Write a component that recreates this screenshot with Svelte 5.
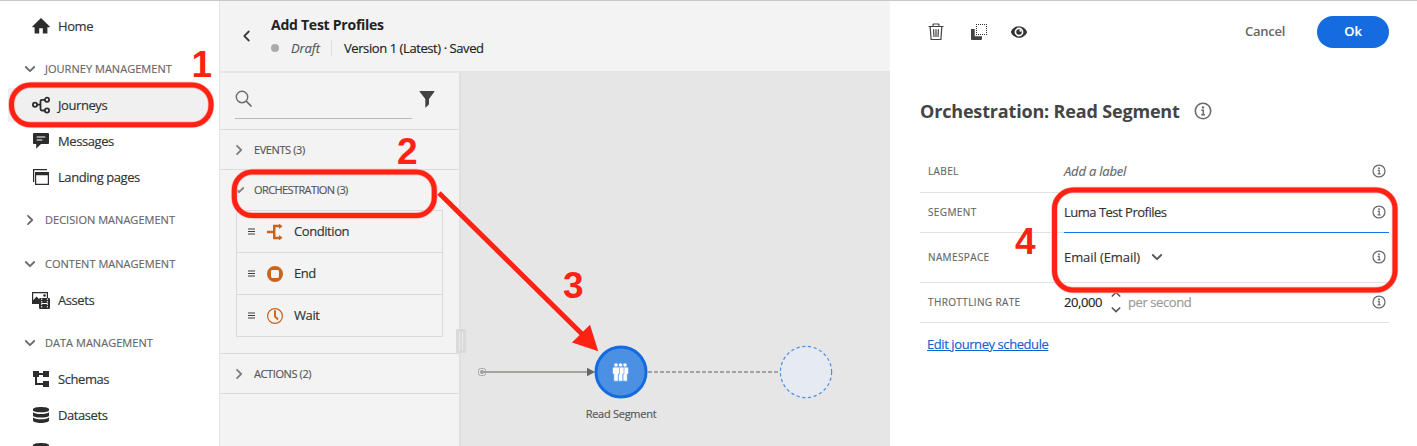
<script>
  const nav = [
    { label: 'Home', icon: 'home' },
    { label: 'JOURNEY MANAGEMENT', head: true, open: true },
    { label: 'Journeys', icon: 'journeys', active: true },
    { label: 'Messages', icon: 'messages' },
    { label: 'Landing pages', icon: 'landing' },
    { label: 'DECISION MANAGEMENT', head: true, open: false },
    { label: 'CONTENT MANAGEMENT', head: true, open: true, gap: true },
    { label: 'Assets', icon: 'assets' },
    { label: 'DATA MANAGEMENT', head: true, open: true },
    { label: 'Schemas', icon: 'schemas' },
    { label: 'Datasets', icon: 'datasets' },
    { label: '', icon: 'datasets' }
  ];
  const blocks = ['Condition', 'End', 'Wait'];
</script>

{#snippet chevron(open)}
  <svg class="chev" width="12" height="12" viewBox="0 0 12 12">
    {#if open}
      <path d="M1.8 4 6 8.2 10.2 4" />
    {:else}
      <path d="M4 1.8 8.2 6 4 10.2" />
    {/if}
  </svg>
{/snippet}

{#snippet info(size)}
  <svg width={size} height={size} viewBox="0 0 18 18" fill="none" stroke="#6a6a6a">
    <circle cx="9" cy="9" r="7.7" stroke-width="1.6" />
    <circle cx="9" cy="5.4" r="1.2" fill="#6a6a6a" stroke="none" />
    <path d="M7.3 8.2h2v4.4M7.2 12.7h3.8" stroke-width="1.5" />
  </svg>
{/snippet}

{#snippet navIcon(name)}
  <svg width="18" height="18" viewBox="0 0 18 18" fill="#2c2c2c">
    {#if name === 'home'}
      <path d="M9 .9 17.7 9.6q.3.6-.4.6H15.400v6.300h-4.600v-5.300H7.200v5.300H2.600V10.200H.7q-.7 0-.4-.6z" />
    {:else if name === 'journeys'}
      <g fill="none" stroke="#2c2c2c" stroke-width="1.8">
        <circle cx="3" cy="8.700" r="2.100" /><circle cx="15" cy="3.800" r="2.100" /><circle cx="15" cy="14.500" r="2.100" />
        <path d="M5 8.700h3.500M12.800 3.800H10q-1.500 0-1.500 1.500v7.700q0 1.500 1.500 1.500h2.800" />
      </g>
    {:else if name === 'messages'}
      <path d="M2 1h14q1 0 1 1v9q0 1-1 1H9l-4.800 4.800V12H2q-1 0-1-1V2q0-1 1-1z" />
      <path d="M4.700 5h8.600M4.700 8h5.600" stroke="#fff" stroke-width="1.200" />
    {:else if name === 'landing'}
      <path d="M1 1h14v1.200H2.200V14H1z" />
      <path d="M3 4h14v13H3zm1.200 3.300v8.500h11.600V7.300z" fill-rule="evenodd" />
    {:else if name === 'assets'}
      <path d="M0 1h16v6h-1.200V2.200H1.200v7L4.500 5.500 7 8v5H0z" fill-rule="evenodd" />
      <circle cx="12.500" cy="4.500" r="1.300" />
      <path d="M8.500 7h8.300q1.200 0 1.200 1.200v8.600q0 1.200-1.200 1.200H8.200Q7 18 7 16.800V8.200Q7 7 8.500 7z" />
      <path d="M9.700 7.500v10M15.300 7.500v10" stroke="#fff" stroke-width="1" stroke-dasharray="1.500 1" />
      <path d="M9.500 12.500h6" stroke="#fff" stroke-width="1" />
    {:else if name === 'schemas'}
      <path d="M1 1h6v2h4V1h6v6h-6V5H7v2H5v6h6v-2h6v6h-6v-2H3V7H1z" />
    {:else}
      <path d="M1 3.300C1 .2 17 .2 17 3.300v1C17 7 1 7 1 4.300z" />
      <path d="M1 6.200c2 2.400 14 2.400 16 0v3.300c0 2.700-16 2.700-16 0z" />
      <path d="M1 11.500c2 2.400 14 2.400 16 0v3c0 3.300-16 3.300-16 0z" />
    {/if}
  </svg>
{/snippet}

<div class="app">
  <aside>
    {#each nav as n}
      {#if n.head}
        <div class="head" class:gap={n.gap}>{@render chevron(n.open)}<span>{n.label}</span></div>
      {:else}
        <div class="item" class:active={n.active}>{@render navIcon(n.icon)}<span>{n.label}</span></div>
      {/if}
    {/each}
  </aside>

  <main>
    <header>
      <svg class="back" width="12" height="12" viewBox="0 0 12 12"><path d="M7.800 1.500 3.300 6l4.500 4.500" /></svg>
      <div class="titles">
        <h1>Add Test Profiles</h1>
        <div class="status"><i></i><em>Draft</em><b></b><span>Version 1 (Latest) · Saved</span></div>
      </div>
    </header>
    <div class="work">
      <div class="palette">
        <div class="search">
          <div class="field">
            <svg width="18" height="18" viewBox="0 0 18 18" fill="none" stroke="#6a6a6a" stroke-width="1.400"><circle cx="7" cy="7" r="5.700" /><path d="m11.200 11.200 5.300 5.300" stroke-width="1.700" /></svg>
          </div>
          <svg width="16" height="18" viewBox="0 0 16 18" fill="#424242"><path d="M.8 1h14.400q.6 0 .3.600L10 9v5.300L7 17.200q-.7.500-.7-.3V9L.5 1.600Q.2 1 .8 1z" /></svg>
        </div>
        <div class="sec">{@render chevron(false)}<span>EVENTS (3)</span></div>
        <div class="sec open">{@render chevron(true)}<span>ORCHESTRATION (3)</span></div>
        <div class="blocks">
          {#each blocks as b}
            <div class="block">
              <svg width="7" height="7" viewBox="0 0 7 7"><path d="M0 1h7M0 3.500h7M0 6h7" stroke="#3c3c3c" stroke-width="1" /></svg>
              <svg class="bi" width="16" height="16" viewBox="0 0 16 16" fill="#c9651b">
                {#if b === 'Condition'}
                  <path d="M0 6.800h6V.8h6V-.4L15.600 2.300 12 5V3.300H8.500v9.400H12V11l3.600 2.700L12 16.400v-1.200H6V9.200H0z" />
                {:else if b === 'End'}
                  <path d="M8 0a8 8 0 1 1 0 16A8 8 0 1 1 8 0zM5.400 4Q4 4 4 5.400v5.200Q4 12 5.400 12h5.200q1.400 0 1.400-1.400V5.400Q12 4 10.600 4z" fill-rule="evenodd" />
                {:else}
                  <circle cx="8" cy="8" r="7.400" fill="none" stroke="#c9651b" stroke-width="1.200" />
                  <path d="M8 2.300v6l3 3.200" fill="none" stroke="#c9651b" stroke-width="1.900" />
                {/if}
              </svg>
              <span>{b}</span>
            </div>
          {/each}
        </div>
        <div class="sec last">{@render chevron(false)}<span>ACTIONS (2)</span></div>
      </div>
      <div class="canvas">
        <svg width="429" height="373" viewBox="461 73 429 373">
          <rect x="478.500" y="368.500" width="7" height="7" rx="2" fill="none" stroke="#a9a9a9" />
          <circle cx="482" cy="372" r="2" fill="#a0a0a0" />
          <path d="M482 372h106" stroke="#a3a3a0" stroke-width="1.800" />
          <path d="M587 367.800v8.400l8-4.200z" fill="#666" />
          <path d="M648 372h132" stroke="#a3a3a3" stroke-width="1.800" stroke-dasharray="4 2" />
          <circle cx="621" cy="372" r="25" fill="#4b90e2" stroke="#146bdf" stroke-width="3" />
          <g fill="#fff" stroke="#4b90e2" stroke-width=".6">
            {#each [9, 4.5, 0] as dx}
              <g transform="translate({612.500 + dx} 363)">
                <path d="M1.500 4h4q1.500 0 1.500 1.500V11H5.800v7.200H1.300V11H0V5.500Q0 4 1.500 4z" />
                <circle cx="3.500" cy="2" r="2.100" />
              </g>
            {/each}
          </g>
          <circle cx="806" cy="372" r="25.600" fill="#e6eaf3" stroke="#4b90e2" stroke-width="1.200" stroke-dasharray="3.200 2.600" />
        </svg>
        <span class="node">Read Segment</span>
        <div class="grip"><i></i></div>
      </div>
    </div>
  </main>

  <section>
    <div class="tools">
      <svg width="16" height="18" viewBox="0 0 16 18" fill="none" stroke="#424242" stroke-width="1.200"><path d="M.5 3.500h15M5 3.200V1.600q0-.6.600-.6h4.800q.6 0 .6.600v1.600M2.200 4l.9 12.500h9.800L13.800 4M5.600 6.300l.4 7.700M8 6.300V14M10.400 6.300 10 14" /></svg>
      <svg class="dup" width="18" height="18" viewBox="0 0 18 18"><path d="M1 6h3.700v7.300H12V16q0 1-1 1H2q-1 0-1-1z" fill="#424242" /><path d="M6 1.500h11M6 11.500h11M6.500 3v8M16.500 3v8" fill="none" stroke="#333" stroke-width="1" stroke-dasharray="1 1" /></svg>
      <svg class="eye" width="18" height="18" viewBox="0 0 18 18"><path d="M9 3.200c4.400 0 8 3.900 8 5.800s-3.600 5.800-8 5.800S1 10.900 1 9s3.600-5.800 8-5.800z" fill="#333" /><circle cx="9" cy="9" r="4.400" fill="#fff" /><circle cx="9" cy="9" r="2.800" fill="#333" /><circle cx="10.500" cy="7.700" r="1.100" fill="#fff" /></svg>
      <span class="cancel">Cancel</span>
      <button>Ok</button>
    </div>
    <h2><span>Orchestration: Read Segment</span>{@render info(18)}</h2>
    <div class="form">
      <div class="row r1"><label>LABEL</label><span class="val"><em>Add a label</em></span>{@render info(14)}</div>
      <div class="row r2"><label>SEGMENT</label><span class="val seg">Luma Test Profiles</span>{@render info(14)}</div>
      <div class="row r3"><label>NAMESPACE</label><span class="val"><span class="ns">Email (Email)</span>{@render chevron(true)}</span>{@render info(14)}</div>
      <div class="row r4"><label>THROTTLING RATE</label><span class="val"><span class="num">20,000</span>
        <svg class="step" width="10" height="22" viewBox="0 0 10 22"><path d="m1.300 5 3.700-3.500L8.700 5M1.300 17 5 20.500 8.700 17" /></svg><span class="per">per second</span></span>{@render info(14)}</div>
    </div>
    <a href="#schedule">Edit journey schedule</a>
  </section>

  <svg class="notes" width="1417" height="446" viewBox="0 0 1417 446">
    <g fill="none">
      {#each [['#ffb3ad', 6.4], ['#fe2214', 5]] as [c, w]}
        <g stroke={c} stroke-width={w}>
          <rect x="11.500" y="85" width="199.500" height="39.800" rx="19" />
          <rect x="234.300" y="172" width="200" height="43.500" rx="18" />
          <rect x="1054.500" y="190" width="340.500" height="100" rx="19" />
        </g>
      {/each}
      <path d="M439 193 583 335" stroke="#fe2214" stroke-width="5" />
    </g>
    <g fill="#fe2214">
      <path d="M598.300 351.300 572 342.500 590 324.800z" />
      <text x="191.500" y="77">1</text>
      <text x="397" y="164">2</text>
      <text x="563" y="298">3</text>
      <text x="1015" y="254">4</text>
    </g>
  </svg>
</div>

<style>
  :global(body) { overflow: hidden; }
  .app { position: relative; display: flex; width: 1417px; height: 446px; overflow: hidden; box-sizing: border-box; border-top: 1px solid #c8c8c8; background: #fff; color: #333; font: 13px/18px "Open Sans", "Noto Sans", sans-serif; letter-spacing: -.42px; -webkit-text-stroke: .15px; }
  .app * { box-sizing: border-box; }
  svg { flex: none; display: block; }
  span, em, a, label { white-space: nowrap; }
  aside { width: 220px; flex: none; padding: 7px 8px 0; border-right: 1px solid #e4e4e4; background: #fff; }
  .item { display: flex; align-items: center; gap: 8px; height: 36px; padding-left: 24px; }
  .item.active { background: linear-gradient(#f0f0f0, #f0f0f0) 0 1px / 100% 34px no-repeat; }
  .head { display: flex; align-items: center; gap: 9px; height: 36px; margin-top: 7px; padding-left: 16px; font-size: 11px; letter-spacing: .03px; color: #666; }
  .head.gap { margin-top: 8px; }
  .chev { fill: none; stroke: #6b6b6b; stroke-width: 1.800; stroke-linecap: round; stroke-linejoin: round; }
  main { width: 670px; flex: none; display: flex; flex-direction: column; background: #f3f3f3; }
  header { display: flex; height: 72px; flex: none; padding: 14px 0 0 21px; border-bottom: 2px solid #e5e5e5; }
  .back { margin-top: 15px; fill: none; stroke: #3c3c3c; stroke-width: 1.800; stroke-linecap: round; stroke-linejoin: round; }
  .titles { margin-left: 18px; }
  h1 { margin: 0; font-size: 14px; line-height: 20px; font-weight: 700; letter-spacing: -.25px; color: #222; white-space: nowrap; -webkit-text-stroke: 0; }
  .status { display: flex; align-items: center; height: 26px; color: #222; }
  .status i { width: 8px; height: 8px; border-radius: 50%; background: #aaa; }
  .status em { margin-left: 12px; width: 29px; color: #555; letter-spacing: -.1px; }
  .status b { width: 1px; height: 16px; margin: 0 12px 0 11px; background: #dedede; }
  .work { display: flex; flex: 1; }
  .palette { width: 241px; border-right: 2px solid #e0e0e0; }
  .search { display: flex; height: 57px; padding: 17px 24px 0 15px; justify-content: space-between; border-bottom: 1px solid #dcdcdc; }
  .field { width: 177px; height: 29px; border-bottom: 1px solid #b8b8b8; }
  .sec { display: flex; align-items: center; gap: 9px; height: 40px; padding-left: 13px; border-bottom: 1px solid #dcdcdc; font-size: 11px; letter-spacing: -.4px; color: #555; }
  .sec .chev { stroke: #808080; }
  .sec.open { border: 0; letter-spacing: -.6px; }
  .sec.last { border-top: 1px solid #dcdcdc; height: 41px; }
  .blocks { width: 207px; margin: 0 0 16px 16px; border: 1px solid #dadada; }
  .block { display: flex; align-items: center; height: 42px; padding-left: 11px; border-bottom: 1px solid #dadada; }
  .block span { padding-bottom: 2px; }
  .block:last-child { height: 41px; border: 0; }
  .bi { margin: 0 11px 0 12px; }
  .canvas { position: relative; flex: 1; background: #e6e6e6; }
  .node { position: absolute; left: 96px; top: 332px; width: 128px; text-align: center; font-size: 11px; letter-spacing: -.27px; color: #555; }
  .grip { position: absolute; left: -5px; top: 256px; width: 10px; height: 24px; padding: 3px; background: #dadada; border-radius: 1px; }
  .grip i { display: block; height: 18px; border: solid #eaeaea; border-width: 0 1px; }
  section { flex: 1; padding: 15px 28px 0 30px; background: #fff; }
  .tools { display: flex; align-items: center; height: 32px; padding-left: 7.500px; }
  .dup { margin-left: 26px; }
  .eye { margin-left: 22px; }
  .cancel { margin-left: auto; padding-bottom: 2px; font-weight: 600; letter-spacing: -.25px; color: #666; -webkit-text-stroke: 0; }
  button { width: 72px; height: 32px; margin-left: 32px; padding: 0 0 2px; border: 0; border-radius: 16px; background: #146ce0; color: #fff; font: inherit; font-weight: 600; }
  h2 { display: flex; align-items: center; gap: 14px; height: 26px; margin: 50px 0 26px; font-size: 18px; letter-spacing: -.17px; color: #444; white-space: nowrap; -webkit-text-stroke: 0; }
  .form { width: 469px; }
  .row { display: flex; align-items: center; border-bottom: 1px solid #e2e2e2; padding: 0 3px 1px 8px; height: 40px; }
  .row.r1 { height: 43px; padding-bottom: 0; }
  .row.r2 { padding: 0 0 0 8px; }
  .row.r2 label { padding-bottom: 2px; }
  .row.r2 svg { margin: 0 3px 1px -17px; }
  .row.r3 { height: 50px; }
  label { width: 136px; flex: none; font-size: 10px; letter-spacing: .38px; color: #666; }
  .val { display: flex; align-items: center; flex: 1; }
  .seg { height: 40px; padding-bottom: 2px; margin-bottom: -1px; border-bottom: 1px solid #1473e6; letter-spacing: -.5px; }
  .val em { color: #666; letter-spacing: -.2px; }
  .ns { width: 77px; letter-spacing: -.08px; }
  .val .chev { margin-left: 10px; stroke: #555; }
  .num { width: 38px; color: #222; }
  .step { margin: 0 7px 0 9px; fill: none; stroke: #555; stroke-width: 1.700; stroke-linecap: round; }
  .per { color: #999; }
  a { display: inline-block; margin: 12px 0 0 7px; color: #0d66d0; }
  .notes { position: absolute; left: 0; top: -1px; pointer-events: none; }
  text { font: bold 37px "Liberation Sans", Arial, sans-serif; letter-spacing: 0; }
</style>
